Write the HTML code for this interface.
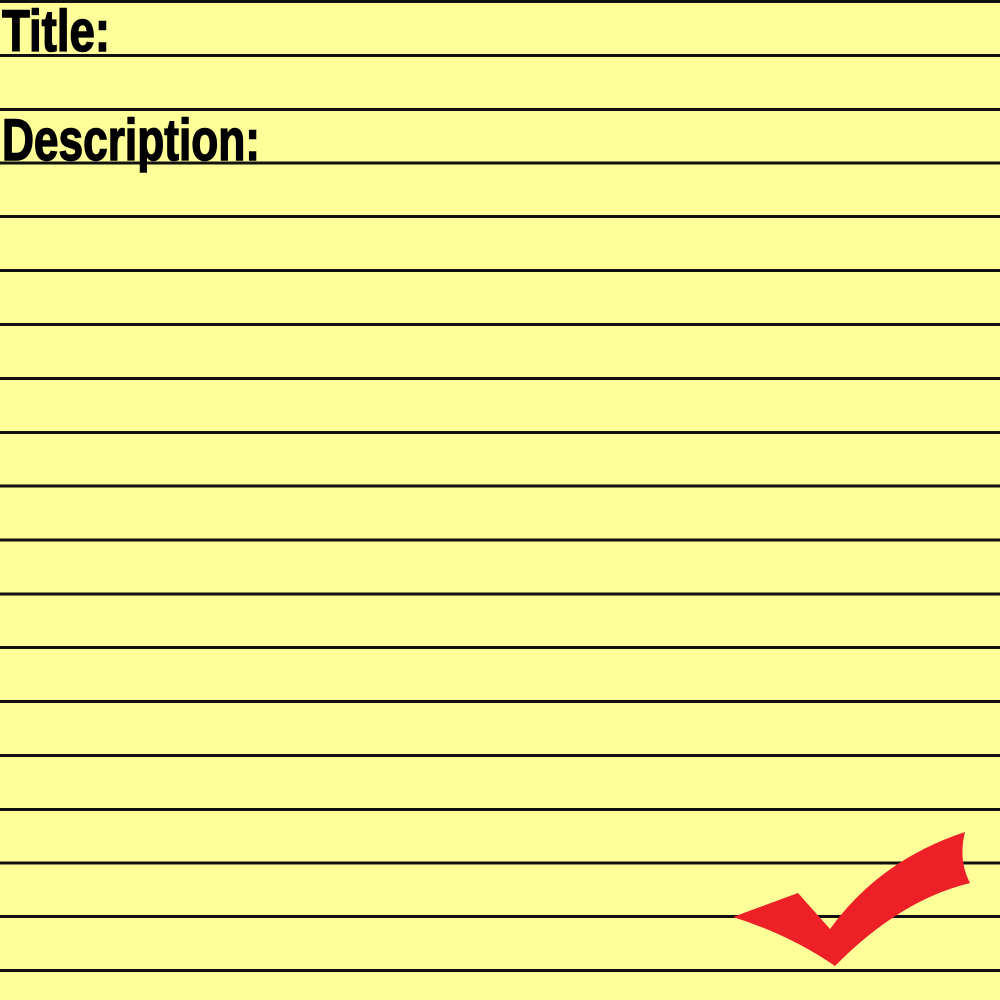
<!DOCTYPE html>
<html><head><style>
html,body{margin:0;padding:0;width:1000px;height:1000px;overflow:hidden;background:#ffff99}
</style></head><body>
<svg width="1000" height="1000" viewBox="0 0 1000 1000" xmlns="http://www.w3.org/2000/svg">
<rect width="1000" height="1000" fill="#ffff99"/>
<g stroke="#111" stroke-width="3">
<line x1="0" y1="1.5" x2="1000" y2="1.5"/>
<line x1="0" y1="55.5" x2="1000" y2="55.5"/>
<line x1="0" y1="109.5" x2="1000" y2="109.5"/>
<line x1="0" y1="163" x2="1000" y2="163"/>
<line x1="0" y1="216.5" x2="1000" y2="216.5"/>
<line x1="0" y1="270.5" x2="1000" y2="270.5"/>
<line x1="0" y1="324.5" x2="1000" y2="324.5"/>
<line x1="0" y1="378.5" x2="1000" y2="378.5"/>
<line x1="0" y1="432.5" x2="1000" y2="432.5"/>
<line x1="0" y1="486" x2="1000" y2="486"/>
<line x1="0" y1="540" x2="1000" y2="540"/>
<line x1="0" y1="594" x2="1000" y2="594"/>
<line x1="0" y1="647.5" x2="1000" y2="647.5"/>
<line x1="0" y1="701.5" x2="1000" y2="701.5"/>
<line x1="0" y1="755.5" x2="1000" y2="755.5"/>
<line x1="0" y1="809.5" x2="1000" y2="809.5"/>
<line x1="0" y1="863" x2="1000" y2="863"/>
<line x1="0" y1="916.5" x2="1000" y2="916.5"/>
<line x1="0" y1="970.5" x2="1000" y2="970.5"/>
</g>
<g font-family="'Liberation Sans Narrow','Liberation Sans',sans-serif" font-weight="bold" font-size="58" fill="#000" stroke="#000" stroke-width="1.5">
<text x="2" y="51" textLength="108" lengthAdjust="spacingAndGlyphs">Title:</text>
<text x="2" y="160" textLength="258" lengthAdjust="spacingAndGlyphs">Description:</text>
</g>
<path d="M733,917 L798,893 L830,929 Q880,860 965,832 Q958,860 970,883 Q900,900 835,966 Q790,935 733,917 Z" fill="#ed1f27"/>
</svg>
</body></html>
